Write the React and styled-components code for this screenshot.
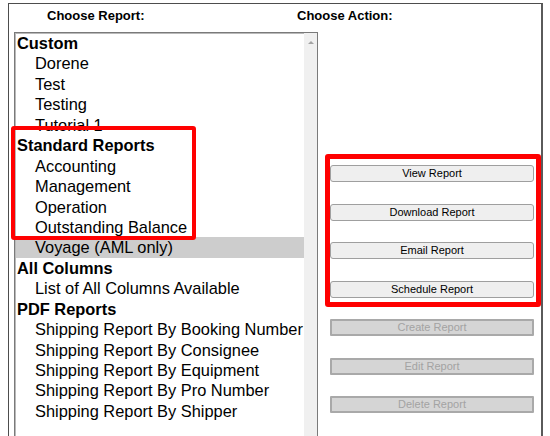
import React from "react";
import styled, { createGlobalStyle } from "styled-components";

const Global = createGlobalStyle`
  html, body { margin: 0; padding: 0; background: #fff; }
  body { width: 550px; height: 436px; overflow: hidden; position: relative; font-family: "Liberation Sans", Arial, sans-serif; }
`;

const Panel = styled.div`
  margin: 3px 0 0 8px;
  width: 532px;
  height: 440px;
  border: 1px solid #4d4d4d;
  border-right: 2px solid #5a5a5a;
  border-bottom: none;
  box-sizing: content-box;
  display: flex;
  flex-direction: column;
  overflow: hidden;
`;

const HeaderRow = styled.div`
  display: flex;
  padding: 4px 0 0 38px;
  height: 19px;
  margin-bottom: 9px;
`;

const Header = styled.div`
  font-weight: bold;
  font-size: 13px;
  line-height: 15px;
  color: #000;
  width: ${(p) => p.$w}px;
`;

const Content = styled.div`
  display: flex;
  padding-left: 5px;
`;

const ListBox = styled.div`
  width: 302px;
  height: 420px;
  border: 1px solid #7a7a7a;
  box-shadow: inset 1px 1px 0 #b9b9b9;
  display: flex;
  background: #fff;
`;

const Items = styled.div`
  flex: 1;
  padding: 0 0 0 1px;
  display: flex;
  flex-direction: column;
`;

const Row = styled.div`
  height: 20.44px;
  line-height: 20.44px;
  font-size: 16.4px;
  white-space: nowrap;
  color: #000;
  font-weight: ${(p) => (p.$group ? "bold" : "normal")};
  padding-left: ${(p) => (p.$group ? 1 : 19)}px;
  background: ${(p) => (p.$selected ? "#cdcdcd" : "transparent")};
`;

const ScrollTrack = styled.div`
  width: 13px;
  background: #f0f0f0;
  display: flex;
  justify-content: center;
  padding-top: 8px;
  box-sizing: border-box;
`;

const UpArrow = styled.div`
  width: 0;
  height: 0;
  border-left: 3px solid transparent;
  border-right: 3px solid transparent;
  border-bottom: 3px solid #a3a3a3;
`;

const Actions = styled.div`
  display: flex;
  flex-direction: column;
  gap: 21.5px;
  padding: 133px 0 0 12px;
`;

const Button = styled.button`
  width: 204px;
  height: 17px;
  box-sizing: border-box;
  padding: 0;
  font-family: "Liberation Sans", Arial, sans-serif;
  font-size: 11px;
  line-height: 13px;
  border: ${(p) => (p.disabled ? "2px solid #a9a9a9" : "1px solid #9f9f9f")};
  border-radius: ${(p) => (p.disabled ? "1px" : "3px")};
  background: ${(p) => (p.disabled ? "#d5d5d5" : "#efefef")};
  color: ${(p) => (p.disabled ? "#a3a3a3" : "#000")};
`;

const Highlight = styled.div`
  position: absolute;
  left: ${(p) => p.$x}px;
  top: ${(p) => p.$y}px;
  width: ${(p) => p.$w}px;
  height: ${(p) => p.$h}px;
  box-sizing: border-box;
  border: ${(p) => p.$t}px solid #ff0000;
  border-radius: 3px;
  pointer-events: none;
`;

const rows = [
  { t: "Custom", g: true },
  { t: "Dorene" },
  { t: "Test" },
  { t: "Testing" },
  { t: "Tutorial 1" },
  { t: "Standard Reports", g: true },
  { t: "Accounting" },
  { t: "Management" },
  { t: "Operation" },
  { t: "Outstanding Balance" },
  { t: "Voyage (AML only)", s: true },
  { t: "All Columns", g: true },
  { t: "List of All Columns Available" },
  { t: "PDF Reports", g: true },
  { t: "Shipping Report By Booking Number" },
  { t: "Shipping Report By Consignee" },
  { t: "Shipping Report By Equipment" },
  { t: "Shipping Report By Pro Number" },
  { t: "Shipping Report By Shipper" },
];

const actions = [
  { t: "View Report" },
  { t: "Download Report" },
  { t: "Email Report" },
  { t: "Schedule Report" },
  { t: "Create Report", d: true },
  { t: "Edit Report", d: true },
  { t: "Delete Report", d: true },
];

export default function App() {
  return (
    <>
      <Global />
      <Panel>
        <HeaderRow>
          <Header $w={250}>Choose Report:</Header>
          <Header $w={120}>Choose Action:</Header>
        </HeaderRow>
        <Content>
          <ListBox>
            <Items>
              {rows.map((r) => (
                <Row key={r.t} $group={r.g} $selected={r.s}>
                  {r.t}
                </Row>
              ))}
            </Items>
            <ScrollTrack>
              <UpArrow />
            </ScrollTrack>
          </ListBox>
          <Actions>
            {actions.map((a) => (
              <Button key={a.t} disabled={a.d}>
                {a.t}
              </Button>
            ))}
          </Actions>
        </Content>
      </Panel>
      <Highlight $x={11} $y={126} $w={185} $h={114} $t={4} />
      <Highlight $x={325} $y={154} $w={216} $h={153} $t={5} />
    </>
  );
}
